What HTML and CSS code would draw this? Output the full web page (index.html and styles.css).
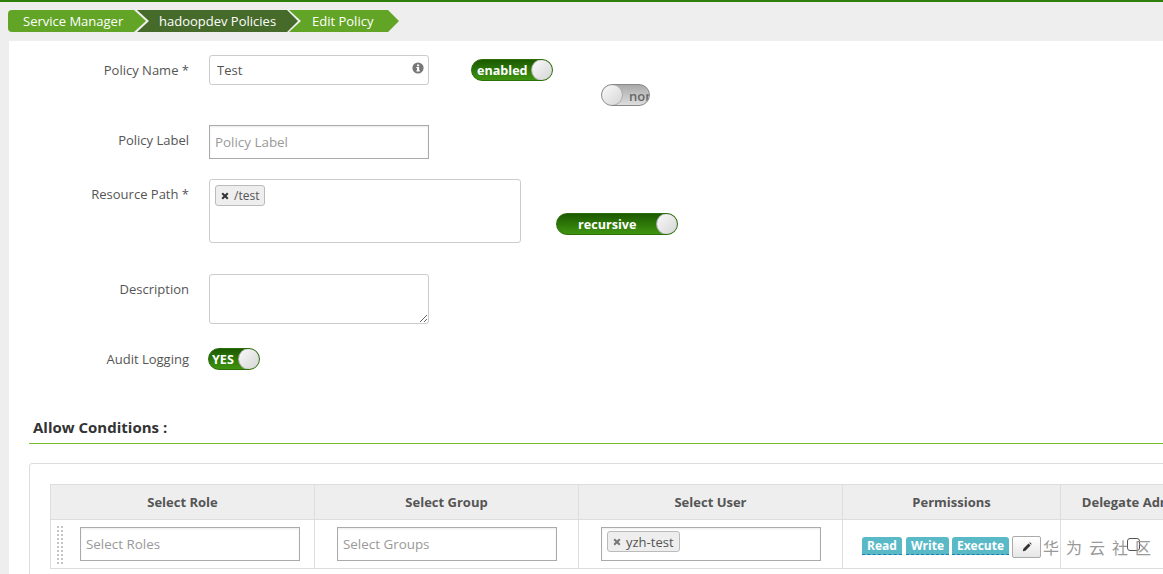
FILE: index.html
```html
<!DOCTYPE html>
<html lang="en">
<head>
<meta charset="utf-8">
<title>Edit Policy</title>
<link rel="stylesheet" href="styles.css">
</head>
<body>
<nav class="crumbs">
  <a class="crumb crumb-first">Service Manager</a>
  <a class="crumb crumb-dark">hadoopdev Policies</a>
  <a class="crumb crumb-last">Edit Policy</a>
</nav>
<main class="panel">
  <div class="row row-name">
    <label class="label">Policy Name *</label>
    <div class="input-wrap">
      <input class="field field-name" value="Test">
      <svg class="info" viewBox="0 0 12 12" width="12" height="12"><circle cx="6" cy="6" r="5.6" fill="#777"/><rect x="5" y="5" width="2.2" height="4.2" fill="#fff"/><rect x="4.3" y="5" width="1.5" height="1" fill="#fff"/><rect x="4.3" y="8.4" width="3.6" height="1" fill="#fff"/><rect x="5" y="2.5" width="2.2" height="1.7" fill="#fff"/></svg>
    </div>
    <div class="toggle-stack">
      <div class="toggle toggle-on toggle-enabled"><span class="toggle-text">enabled</span><span class="knob"></span></div>
      <div class="toggle toggle-off toggle-non"><span class="knob"></span><span class="toggle-text">non</span></div>
    </div>
  </div>
  <div class="row row-label">
    <label class="label">Policy Label</label>
    <input class="field field-hard field-label" placeholder="Policy Label">
  </div>
  <div class="row row-path">
    <label class="label">Resource Path *</label>
    <div class="tag-box">
      <span class="tag tag-path"><svg class="tag-x" viewBox="0 0 8 8" width="8" height="8"><path d="M1.2 1.2 6.8 6.8M6.8 1.2 1.2 6.8" stroke="#333" stroke-width="2"/></svg>/test</span>
    </div>
    <div class="toggle toggle-on toggle-recursive"><span class="toggle-text">recursive</span><span class="knob"></span></div>
  </div>
  <div class="row row-desc">
    <label class="label">Description</label>
    <textarea class="field field-desc"></textarea>
  </div>
  <div class="row row-audit">
    <label class="label label-audit">Audit Logging</label>
    <div class="toggle toggle-on toggle-yes"><span class="toggle-text">YES</span><span class="knob"></span></div>
  </div>
  <h2 class="section-title">Allow Conditions :</h2>
  <section class="cond-box">
    <table class="cond-table">
      <colgroup><col class="col-select"><col class="col-select"><col class="col-select"><col class="col-perm"><col class="col-admin"></colgroup>
      <thead>
        <tr><th>Select Role</th><th>Select Group</th><th>Select User</th><th>Permissions</th><th>Delegate Admin</th></tr>
      </thead>
      <tbody>
        <tr>
          <td class="cell-role"><span class="drag"></span><input class="field field-hard field-cell" placeholder="Select Roles"></td>
          <td class="cell-select"><input class="field field-hard field-cell" placeholder="Select Groups"></td>
          <td class="cell-select"><div class="field-hard user-box"><span class="tag tag-user"><svg class="tag-x" viewBox="0 0 8 8" width="8" height="8"><path d="M1.2 1.2 6.8 6.8M6.8 1.2 1.2 6.8" stroke="#777" stroke-width="2"/></svg>yzh-test</span></div></td>
          <td class="cell-perm"><div class="perms"><span class="perm perm-read">Read</span><span class="perm perm-write">Write</span><span class="perm perm-exec">Execute</span><button class="edit"><svg viewBox="0 0 12 12" width="10" height="10"><path d="M1 11 1.6 8 7.8 1.8 10.2 4.2 4 10.4Z M8.6 1 9.6 0.4 11.6 2.4 11 3.4Z" fill="#333"/></svg></button></div></td>
          <td class="cell-admin"><span class="check"></span></td>
        </tr>
      </tbody>
    </table>
  </section>
</main>
<div class="watermark">华为云社区</div>
</body>
</html>
```
FILE: styles.css
```css
* { box-sizing: border-box; }
html, body { height: 574px; overflow: hidden; }
body {
  margin: 0;
  position: relative;
  background: #eeeeee;
  border-top: 2px solid #2f7d0b;
  font-family: "Open Sans", "Noto Sans", sans-serif;
  font-size: 13px;
  color: #555;
}
.crumbs { display: flex; height: 22px; margin: 8px 0 9px 8px; }
.crumb {
  display: flex;
  align-items: center;
  height: 22px;
  color: #fff;
  font-size: 13px;
  white-space: nowrap;
  background: #62a425;
}
.crumb-first {
  width: 138px;
  padding-left: 15px;
  border-radius: 4px 0 0 4px;
  clip-path: polygon(0 0, calc(100% - 12px) 0, 100% 50%, calc(100% - 12px) 100%, 0 100%);
}
.crumb-dark {
  width: 161px;
  margin-left: -9px;
  padding-left: 22px;
  background: #466a2a;
  clip-path: polygon(0 0, calc(100% - 11px) 0, 100% 50%, calc(100% - 11px) 100%, 0 100%, 12px 50%);
}
.crumb-last {
  width: 110px;
  margin-left: -9px;
  padding-left: 23px;
  clip-path: polygon(0 0, calc(100% - 11px) 0, 100% 50%, calc(100% - 11px) 100%, 0 100%, 12px 50%);
}
.panel {
  margin-left: 9px;
  padding: 14px 0 0 20px;
  background: #fff;
  height: 540px;
  overflow: hidden;
}
.row { display: flex; align-items: flex-start; }
.label {
  width: 160px;
  padding-top: 6px;
  line-height: 18px;
  text-align: right;
  color: #555;
  flex: none;
}
.label-audit { padding-top: 2px; }
.row-name { height: 70px; }
.row-label { height: 34px; margin-bottom: 20px; }
.row-path { height: 64px; margin-bottom: 31px; }
.row-desc { height: 50px; margin-bottom: 24px; }
.row-audit { height: 23px; }
.field {
  display: block;
  width: 220px;
  margin-left: 20px;
  padding: 0 5px;
  border: 1px solid #ccc;
  border-radius: 3px;
  background: #fff;
  font: 13.4px "Open Sans", "Noto Sans", sans-serif;
  color: #555;
  outline: none;
}
.field::placeholder { color: #999; opacity: 1; }
.field-name { height: 30px; padding-left: 7px; font-size: 13px; }
.field-hard { border: 1px solid #aaa; border-radius: 0; box-shadow: inset 0 1px 2px rgba(0,0,0,.08); }
.field-label { height: 34px; }
.field-desc { height: 50px; resize: both; }
.input-wrap { position: relative; flex: none; }
.info { position: absolute; right: 5px; top: 7px; }
.toggle-stack { display: flex; flex-direction: column; margin-left: 42px; padding-top: 4px; }
.toggle {
  display: flex;
  align-items: center;
  height: 22px;
  border-radius: 11px;
  border: 1px solid #888;
  overflow: hidden;
  font-weight: 700;
  font-size: 12.6px;
  line-height: 18px;
  flex: none;
}
.toggle-text { padding-top: 1px; }
.toggle-on {
  background: linear-gradient(#1c5a00, #3f9410);
  color: #fff;
  border-color: #2c6e08;
  justify-content: space-between;
}
.toggle-off { background: linear-gradient(#aaa, #ddd); color: #666; width: 49px; }
.knob {
  width: 22px;
  height: 22px;
  margin: -1px;
  border-radius: 50%;
  border: 1px solid #aaa;
  background: linear-gradient(135deg, #fafafa, #d5d5d5);
  flex: none;
}
.toggle-enabled { width: 82px; padding-left: 5px; }
.toggle-non { margin: 3px 0 0 130px; }
.toggle-non .toggle-text { margin-left: 7px; font-weight: 600; font-size: 13px; }
.tag-box {
  width: 312px;
  height: 64px;
  margin-left: 20px;
  padding: 5px;
  border: 1px solid #ccc;
  border-radius: 3px;
  flex: none;
}
.tag {
  display: inline-flex;
  align-items: center;
  height: 21px;
  padding: 0 4px 0 5px;
  border: 1px solid #bbb;
  border-radius: 3px;
  background: #eee;
  color: #555;
}
.tag-path { font-size: 12px; width: 50px; }
.tag-x { margin-right: 5px; }
.toggle-recursive { width: 122px; margin: 34px 0 0 35px; padding-left: 21px; }
.toggle-yes { width: 52px; margin-left: 19px; padding-left: 3px; }
.section-title {
  margin: 46px 0 19px;
  padding: 0 0 6px 4px;
  border-bottom: 1px solid #78bb2c;
  font-size: 15px;
  line-height: 20px;
  font-weight: 700;
  color: #333;
}
.cond-box {
  width: max-content;
  padding: 20px;
  border: 1px solid #ddd;
  border-radius: 3px;
}
.cond-table { table-layout: fixed; border-collapse: collapse; width: 1156px; }
.col-select { width: 264px; }
.col-perm { width: 218px; }
.col-admin { width: 146px; }
.cond-table th {
  height: 35px;
  padding: 0;
  background: #eee;
  border: 1px solid #ddd;
  font-size: 13px;
  font-weight: 700;
  color: #555;
  text-align: center;
  white-space: nowrap;
}
.cond-table td {
  height: 49px;
  padding: 0;
  border: 1px solid #ddd;
  vertical-align: top;
}
.cell-role { position: relative; padding: 7px 0 0 29px !important; }
.cell-select { padding: 7px 0 0 22px !important; }
.field-cell { height: 34px; margin-left: 0; }
.drag {
  position: absolute;
  left: 5px;
  top: 5px;
  width: 8px;
  height: 39px;
  background-image: radial-gradient(circle, #c4c4c4 1px, transparent 1.2px);
  background-size: 4px 4px;
}
.user-box { width: 220px; height: 34px; padding: 3px 5px; }
.tag-user { width: 73px; }
.cell-perm { padding: 16px 0 0 19px !important; }
.perms { display: flex; align-items: flex-start; }
.perm {
  height: 18px;
  margin-top: 1px;
  margin-right: 4px;
  border-radius: 3px 3px 0 0;
  border-bottom: 1px dashed #1b7fb0;
  background: #5ab9c7;
  color: #fff;
  font-size: 12px;
  font-weight: 700;
  line-height: 17px;
  text-align: center;
}
.perm-read { width: 40px; }
.perm-write { width: 43px; margin-right: 3px; }
.perm-exec { width: 57px; margin-right: 3px; }
.edit {
  display: flex;
  align-items: center;
  justify-content: center;
  width: 29px;
  height: 22px;
  padding: 0;
  border: 1px solid #aaa;
  border-radius: 2px;
  background: linear-gradient(#fff, #e6e6e6);
}
.cell-admin { text-align: center; padding-top: 17px !important; }
.check {
  display: inline-block;
  width: 13px;
  height: 13px;
  border: 1px solid #555;
  border-radius: 3px;
  background: transparent;
}
.watermark {
  position: absolute;
  left: 1043px;
  top: 534px;
  font-family: "Noto Sans CJK SC", sans-serif;
  font-size: 16px;
  line-height: 22px;
  letter-spacing: 7px;
  color: #999;
  white-space: nowrap;
}
```
